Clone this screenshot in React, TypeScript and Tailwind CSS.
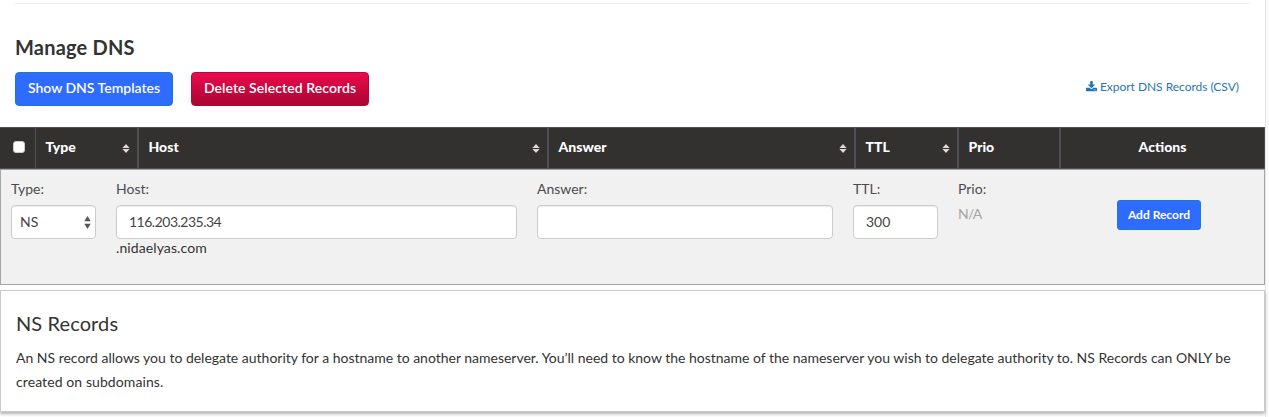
import React from "react";

function SortIcon() {
  return (
    <svg width="8" height="9" viewBox="0 0 8 9" className="shrink-0" fill="#e2d8d8">
      <path d="M4 0L7.6 4H.4zM4 9L.4 5h7.2z" />
    </svg>
  );
}

function DownloadIcon() {
  return (
    <svg width="11" height="11" viewBox="0 -128 1664 1664" className="mt-[-2px]" fill="currentColor">
      <path d="M1280 1216q0-26-19-45t-45-19-45 19-19 45 19 45 45 19 45-19 19-45zm256 0q0-26-19-45t-45-19-45 19-19 45 19 45 45 19 45-19 19-45zm128-224v320q0 40-28 68t-68 28H96q-40 0-68-28t-28-68V992q0-40 28-68t68-28h465l135 136q58 56 136 56t136-56l136-136h464q40 0 68 28t28 68zm-325-569q17 41-14 70l-448 448q-18 19-45 19t-45-19L339 493q-31-29-14-70 17-39 59-39h256V-64q0-26 19-45t45-19h256q26 0 45 19t19 45v448h256q42 0 59 39z" />
    </svg>
  );
}

function HeadCell({ label, width, sortable = false }: { label: string; width: string; sortable?: boolean }) {
  return (
    <div className={`${width} flex items-center justify-between border-x border-[#4e4e54] pr-[7px] pl-[10px]`}>
      <span className="-mt-[3px] -ml-[0.5px]">{label}</span>
      {sortable && <span className="mt-[1px]"><SortIcon /></span>}
    </div>
  );
}

const field =
  "h-[34px] w-full rounded-[4px] border border-[#ccc] bg-white px-3 pb-[2px] text-[14px] text-[#444] shadow-[inset_0_1px_1px_rgba(0,0,0,0.075)] outline-none";
const label = "block h-[16px] leading-[16px] mb-[8px] text-[14px] text-[#4c4c4f]";

export default function App() {
  return (
    <div className="flex h-[417px] w-[1269px] overflow-hidden bg-[#fafafa] font-['Lato',sans-serif] text-[#333]">
      <main className="w-[1266px] border-r border-[#e5e5e5] bg-white">
        <div className="mr-[15px] ml-[15px] h-[4px] border-b border-[#eee]" />
        <h1 className="mt-[30px] ml-[15px] h-[26px] text-[20px] leading-[26px] font-bold tracking-[0.2px]">Manage DNS</h1>
        <div className="mt-[12px] flex h-[34px] items-start pr-[26px] pl-[15px]">
          <button className="h-[34px] w-[158px] rounded-[4px] border border-[#1f78c4] bg-[#2e6bff] pb-[3px] text-[14px] font-semibold whitespace-nowrap text-white">
            Show DNS Templates
          </button>
          <button className="ml-[18px] h-[34px] w-[178px] rounded-[4px] border border-[#b8073a] bg-linear-to-b from-[#ea0b4c] to-[#aa0534] pb-[3px] text-[14px] font-semibold tracking-[0.07px] whitespace-nowrap text-white">
            Delete Selected Records
          </button>
          <a className="mt-[7px] ml-auto flex h-[16px] items-center gap-[3px] text-[12px] tracking-[-0.03px] whitespace-nowrap text-[#1f75b5]">
            <DownloadIcon />
            <span>Export DNS Records (CSV)</span>
          </a>
        </div>

        <div className="mt-[21px] flex h-[42px] w-[1265px] border-y border-[#4e4e54] bg-[#333130] text-[14px] font-black text-white">
          <div className="flex w-[35px] items-center pl-[13px]">
            <span className="-mt-[2px] h-[12px] w-[12px] rounded-[3px] border border-[#ccc] bg-white" />
          </div>
          <HeadCell label="Type" width="w-[103px]" sortable />
          <HeadCell label="Host" width="w-[410px]" sortable />
          <HeadCell label="Answer" width="w-[307px]" sortable />
          <HeadCell label="TTL" width="w-[103px]" sortable />
          <HeadCell label="Prio" width="w-[102px]" />
          <div className="flex flex-1 items-center justify-center border-x border-[#4e4e54] pb-[3px]">Actions</div>
        </div>

        <div className="flex h-[116px] w-[1265px] border border-[#a5a5a5] bg-[#f1f1f1] pt-[11px] pl-[10px]">
          <div className="w-[85px]">
            <span className={label}>Type:</span>
            <div className="relative">
              <select className={`${field} appearance-none !px-[8px]`}>
                <option>NS</option>
              </select>
              <svg width="7" height="13" viewBox="0 0 7 13" className="absolute top-[11px] right-[5px]" fill="#555">
                <path d="M3.5 0L6.7 5.3H.3zM3.5 13L.3 7.7h6.4z" />
              </svg>
            </div>
          </div>
          <div className="ml-[20px] w-[401px]">
            <span className={label}>Host:</span>
            <input className={`${field} tracking-[-0.5px]`} defaultValue="116.203.235.34" />
            <span className="-mt-[1px] block text-[14px] leading-[20px] tracking-[0.1px]">.nidaelyas.com</span>
          </div>
          <div className="ml-[20px] w-[296px]">
            <span className={label}>Answer:</span>
            <input className={field} />
          </div>
          <div className="ml-[20px] w-[85px]">
            <span className={label}>TTL:</span>
            <input className={field} defaultValue="300" />
          </div>
          <div className="ml-[20px] w-[102px]">
            <span className={label}>Prio:</span>
            <span className="-mt-[1px] block text-[14px] leading-[20px] tracking-[-0.8px] text-[#a5a5a5]">N/A</span>
          </div>
          <button className="mt-[19px] ml-[57px] h-[30px] w-[84px] rounded-[3px] border border-[#1f78c4] bg-[#2e6bff] text-[12px] font-bold whitespace-nowrap text-white">
            Add Record
          </button>
        </div>

        <section className="mt-[5px] h-[122px] w-[1265px] border border-[#ccc] bg-white pt-[19px] pl-[15px] shadow-[0_2px_3px_rgba(0,0,0,0.3)]">
          <h2 className="h-[26px] text-[20px] leading-[26px] tracking-[0.1px]">NS Records</h2>
          <p className="mt-[10px] text-[14px] leading-[24px] tracking-[-0.01px] whitespace-nowrap">
            An NS record allows you to delegate authority for a hostname to another nameserver. You’ll need to know the hostname of the nameserver you wish to delegate authority to. NS Records can ONLY be
            <br />
            <span className="tracking-[0.09px]">created on subdomains.</span>
          </p>
        </section>
      </main>
    </div>
  );
}
